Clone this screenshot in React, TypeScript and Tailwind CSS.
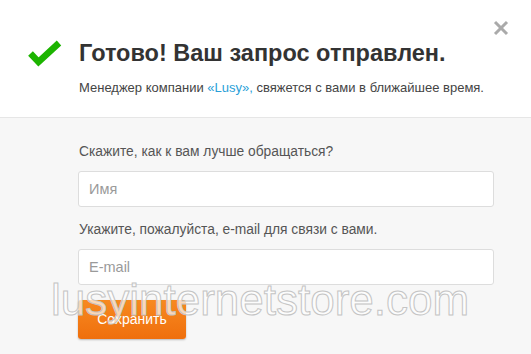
import { X } from 'lucide-react'

const fields = [
  { label: 'Скажите, как к вам лучше обращаться?', placeholder: 'Имя', type: 'text' },
  { label: 'Укажите, пожалуйста, e-mail для связи с вами.', placeholder: 'E-mail', type: 'email' }
]

const App = () => {
  return (
    <div className="relative w-[531px] h-[354px] overflow-hidden bg-white font-['Liberation_Sans',Arial,sans-serif]">
      {/* Header */}
      <div className="h-[118px] border-b border-[#e6e6e6] bg-white">
        <div className="flex items-center pt-[40px] pl-[28px]">
          <svg width="34" height="27" viewBox="0 0 34 27" className="mr-[17px]">
            <polyline
              points="2.5,13.5 10.5,22 31,3"
              fill="none"
              stroke="#1cb400"
              strokeWidth="6.5"
              strokeLinecap="butt"
              strokeLinejoin="miter"
            />
          </svg>
          <h1 className="text-[23.5px] leading-[27px] font-bold text-[#333333]">
            Готово! Ваш запрос отправлен.
          </h1>
        </div>
        <p className="mt-[12px] pl-[79px] text-[13px] leading-[18px] text-[#444444]">
          Менеджер компании <span className="text-[#2a9fd8]">«Lusy»,</span> свяжется с вами в ближайшее время.
        </p>
      </div>

      <button className="absolute left-[489px] top-[16px] text-[#aaaaaa]">
        <X size={24} strokeWidth={3} strokeLinecap="butt" />
      </button>

      {/* Form */}
      <div className="h-[236px] bg-[#f7f7f7] pl-[78px] pt-[25px]">
        {fields.map((field, index) => (
          <div key={index} className={index > 0 ? 'mt-[14px]' : ''}>
            <label className="block text-[13.8px] leading-[18px] text-[#555555] pl-px">{field.label}</label>
            <input
              type={field.type}
              placeholder={field.placeholder}
              className="mt-[10px] block w-[416px] h-[36px] rounded-[3px] border border-[#dddddd] bg-white px-[10px] text-[14.5px] text-[#333] placeholder:text-[#9a9a9a] outline-none"
            />
          </div>
        ))}
        <button className="mt-[15px] w-[108px] h-[39px] rounded-[3px] bg-gradient-to-b from-[#f7891f] to-[#ef6f0c] text-[14px] text-white shadow-[0_1px_2px_rgba(0,0,0,0.25)]">
          Сохранить
        </button>
      </div>

      {/* Watermark */}
      <div className="pointer-events-none absolute left-[51px] top-[278px] text-[44px] leading-[44px] text-white/70 [-webkit-text-stroke:1px_#c4c4c4]">
        lusyinternetstore.com
      </div>
    </div>
  )
}

export default App
